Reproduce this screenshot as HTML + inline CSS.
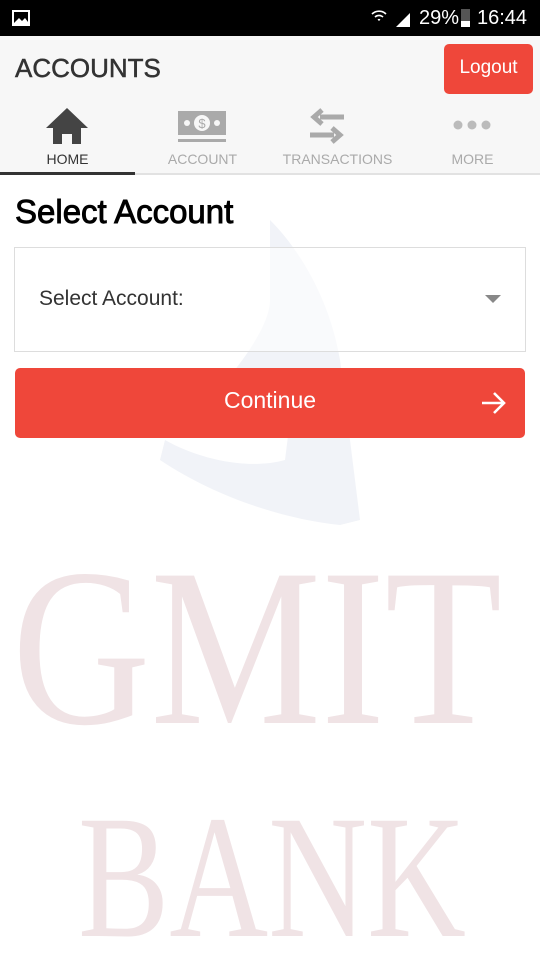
<!DOCTYPE html>
<html><head><meta charset="utf-8">
<style>
*{margin:0;padding:0;box-sizing:border-box}
body{width:540px;height:960px;overflow:hidden;background:#fff;font-family:"Liberation Sans",sans-serif;position:relative}
.sb{position:absolute;top:0;left:0;width:540px;height:36px;background:#000;color:#fff}
.hdr{position:absolute;top:36px;left:0;width:540px;height:139px;background:#f7f7f7;border-bottom:2px solid #e2e2e2}
.title{position:absolute;left:15px;top:17px;font-size:26px;color:#333;-webkit-text-stroke:0.5px #333}
.logout{position:absolute;left:444px;top:8px;width:89px;height:50px;background:#ef473a;border-radius:5px;color:#fff;font-size:19px;text-align:center;line-height:48px}
.tab{position:absolute;top:115px;font-size:14px;color:#aaa;text-align:center;width:135px}
.ul{position:absolute;left:0;top:136px;width:135px;height:3px;background:#333}
h1{position:absolute;left:15px;top:193px;font-size:33px;font-weight:normal;color:#000;-webkit-text-stroke:0.9px #000}
.sel{position:absolute;left:14px;top:247px;width:512px;height:105px;border:1px solid #ddd;background:rgba(255,255,255,.6)}
.sel span{position:absolute;left:24px;top:39px;font-size:21px;color:#333}
.btn{position:absolute;left:15px;top:368px;width:510px;height:70px;background:#ef473a;border-radius:5px;color:#fff;font-size:23px;text-align:center;line-height:64px}
</style></head><body>
<svg style="position:absolute;left:0;top:0" width="540" height="960">
<path d="M270 220 C300 250 330 300 340 360 L360 520 L340 525 C290 520 220 500 160 460 L165 440 C200 460 250 470 285 460 L290 420 C260 420 220 430 190 420 C230 380 270 330 270 300 Z" fill="#f1f3f8"/>
<text x="12" y="723" font-family="Liberation Serif,serif" font-size="225" fill="#f0e3e5" textLength="490" lengthAdjust="spacingAndGlyphs">GMIT</text>
<text x="78" y="936" font-family="Liberation Serif,serif" font-size="176" fill="#f0e3e5" textLength="388" lengthAdjust="spacingAndGlyphs">BANK</text>
</svg>
<div class="sb">
<svg style="position:absolute;left:12px;top:10px" width="18" height="16"><rect x="1" y="1" width="16" height="14" fill="none" stroke="#fff" stroke-width="2"/><path d="M2 13 L7 8 L10 11 L13 8 L16 12 V14 H2Z" fill="#fff"/></svg>
<svg style="position:absolute;left:370px;top:8px" width="44" height="20"><path d="M2 6 A10 10 0 0 1 16 6 M5 9 A6 6 0 0 1 13 9 M8 12 A2 2 0 0 1 10 12" stroke="#fff" stroke-width="1.6" fill="none"/><path d="M26 19 L40 5 V19Z" fill="#fff"/></svg>
<span style="position:absolute;left:419px;top:7px;font-size:20px">29%</span>
<div style="position:absolute;left:461px;top:9px;width:9px;height:18px;background:#555"><div style="position:absolute;bottom:0;width:9px;height:6px;background:#fff"></div></div>
<span style="position:absolute;left:477px;top:7px;font-size:20px">16:44</span>
</div>
<div class="hdr">
<div class="title">ACCOUNTS</div>
<div class="logout">Logout</div>
<svg style="position:absolute;left:46px;top:72px" width="42" height="36"><path d="M21 0 L42 20 H35 V36 H26 V26 H16 V36 H7 V20 H0Z" fill="#444"/></svg>
<svg style="position:absolute;left:178px;top:75px" width="48" height="32"><rect x="0" y="0" width="48" height="24" fill="#aaa"/><circle cx="24" cy="12" r="8" fill="#f7f7f7"/><text x="24" y="17" font-size="13" text-anchor="middle" fill="#aaa" font-family="Liberation Sans">$</text><circle cx="9" cy="12" r="3" fill="#f7f7f7"/><circle cx="39" cy="12" r="3" fill="#f7f7f7"/><rect x="0" y="28" width="48" height="3" fill="#aaa"/></svg>
<svg style="position:absolute;left:308px;top:72px" width="38" height="36"><path d="M36 9 H12 M14 2 L6 9 L14 16" stroke="#aaa" stroke-width="5" fill="none"/><path d="M2 27 H26 M24 20 L32 27 L24 34" stroke="#aaa" stroke-width="5" fill="none"/></svg>
<svg style="position:absolute;left:452px;top:83px" width="40" height="12"><circle cx="6" cy="6" r="4.5" fill="#bbb"/><circle cx="20" cy="6" r="4.5" fill="#bbb"/><circle cx="34" cy="6" r="4.5" fill="#bbb"/></svg>
<div class="tab" style="left:0;color:#333">HOME</div>
<div class="tab" style="left:135px">ACCOUNT</div>
<div class="tab" style="left:270px">TRANSACTIONS</div>
<div class="tab" style="left:405px">MORE</div>
<div class="ul"></div>
</div>
<h1>Select Account</h1>
<div class="sel"><span>Select Account:</span>
<svg style="position:absolute;left:470px;top:47px" width="16" height="9"><path d="M0 0 H16 L8 8Z" fill="#888"/></svg></div>
<div class="btn">Continue
<svg style="position:absolute;left:466px;top:22px" width="26" height="26"><path d="M1 13 H23 M13 3 L23 13 L13 23" stroke="#fff" stroke-width="2.6" fill="none"/></svg></div>
</body></html>
